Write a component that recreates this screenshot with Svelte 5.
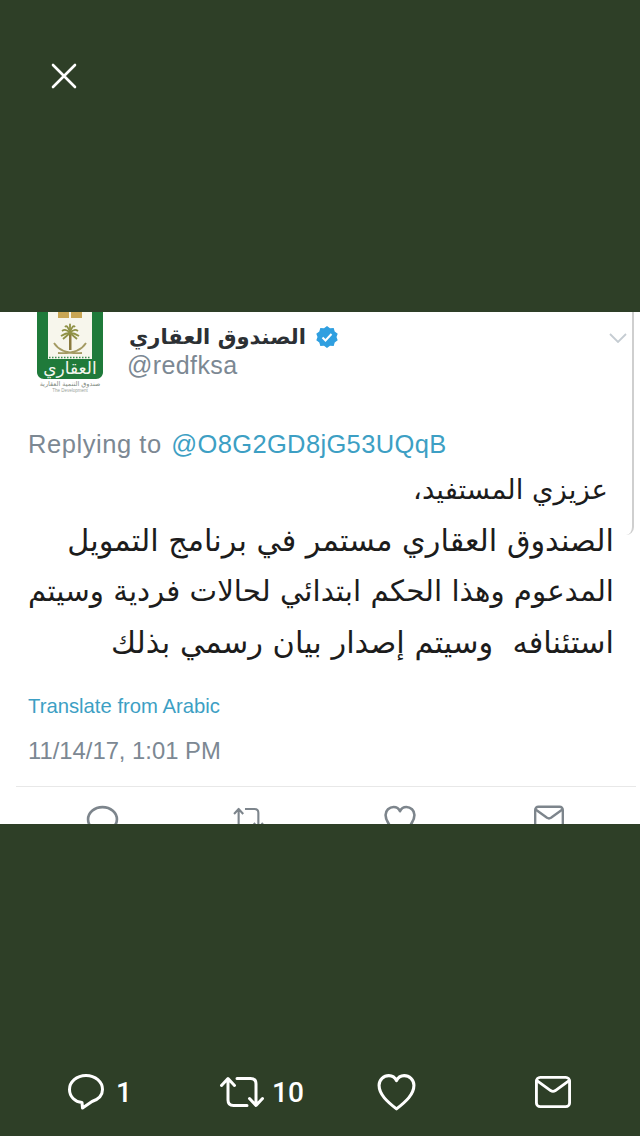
<script>
	const lines = [
		{ text: "عزيزي المستفيد،", cls: "l1" },
		{ text: "الصندوق العقاري مستمر في برنامج التمويل", cls: "l2" },
		{ text: "المدعوم وهذا الحكم ابتدائي لحالات فردية وسيتم", cls: "l3" },
		{ text: "استئنافه  وسيتم إصدار بيان رسمي بذلك", cls: "l4" }
	];

	// palm fronds for the logo, as [end x, end y] from the crown
	const fronds = [
		[26, 24], [27, 19], [30, 15], [35, 13], [40, 15], [43, 19], [44, 24], [28, 27], [42, 27]
	];
</script>

{#snippet reply()}
	<path d="M20 3.500C10.500 3.500 3.500 10 3.500 17.500c0 7 5.500 12.500 12.500 13l.5 5.500 9.500-6.500C32 27.500 36.500 23.500 36.500 17.500 36.500 10 29.500 3.500 20 3.500z" />
{/snippet}
{#snippet retweet()}
	<path d="M8 3v21c0 3.500 2 5.500 5.500 5.500H27M1.500 9.500L8 2.500l6.500 7M17 2.500h13.500c3.500 0 5.500 2 5.500 5.500v21M29.500 22.500l6.500 7 6.500-7" />
{/snippet}
{#snippet heart()}
	<path d="M20 36C11 29 3 22 3 13 3 7.500 7.500 3.500 12.500 3.500c3.300 0 6 1.600 7.500 5 1.500-3.400 4.200-5 7.500-5C32.500 3.500 37 7.500 37 13 37 22 29 29 20 36z" />
{/snippet}
{#snippet mail()}
	<rect x="2.500" y="3.500" width="35" height="31" rx="4" />
	<path d="M3 7l14.500 10.500c1.600 1 3.400 1 5 0L37 7" />
{/snippet}

<main class="viewer">
	<header class="top">
		<button class="close" aria-label="Close">
			<svg viewBox="0 0 26 26" width="26" height="26">
				<path d="M2 2l22 22M24 2L2 24" />
			</svg>
		</button>
	</header>

	<section class="photo">
		<div class="tweet">
			<div class="head">
				<svg class="logo" viewBox="0 0 70 82" width="70" height="82">
					<path d="M2 0h66v60c0 4-3 7-7 7H9c-4 0-7-3-7-7z" fill="#1f7a3a" />
					<path d="M13 0h44v47H13z" fill="#f7f6ec" />
					<rect x="23" y="0" width="24" height="6" fill="#c9a653" />
					<rect x="34" y="0" width="2" height="6" fill="#f7f6ec" />
					<path d="M34 21h2.500v17H34z" fill="#8a7a3e" />
					{#each fronds as [x, y]}
						<path d="M35 21Q{(x + 35) / 2} {y - 3} {x} {y}" fill="none" stroke="#8f9145" stroke-width="1.800" />
					{/each}
					<path d="M19 31c5 8 14 11 28 10M51 31c-5 8-14 11-28 10" fill="none" stroke="#a39a62" stroke-width="1.800" />
					<path d="M14 45.500h42" stroke="#3b8a50" stroke-width="1.500" stroke-dasharray="1.500 1.500" />
					<text class="logo-word" x="35" y="62" text-anchor="middle">العقاري</text>
					<text class="logo-small" x="35" y="74" text-anchor="middle">صندوق التنمية العقارية</text>
					<text class="logo-tiny" x="35" y="80" text-anchor="middle">The Development</text>
				</svg>
				<div class="who">
					<div class="name-row">
						<span class="name" dir="rtl">الصندوق العقاري</span>
						<svg class="badge" viewBox="0 0 24 24" width="24" height="24">
							<path d="M12 1l3 2.200 3.700-.2 1 3.600 3 2.200L21.500 12l1.200 3.200-3 2.200-1 3.600-3.700-.2L12 23l-3-2.200-3.700.2-1-3.600-3-2.200L2.500 12 1.300 8.800l3-2.200 1-3.600 3.700.2z" fill="#2f9fe0" />
							<path d="M7.500 12.500l3 3 6-6.500" fill="none" stroke="#fff" stroke-width="2" />
						</svg>
					</div>
					<div class="handle">@redfksa</div>
				</div>
				<svg class="caret" viewBox="0 0 18 10" width="18" height="10">
					<path d="M1 1l8 8 8-8" />
				</svg>
			</div>

			<p class="replying">Replying to <span class="link">@O8G2GD8jG53UQqB</span></p>

			<div class="body" dir="rtl">
				{#each lines as line}
					<div class={line.cls}>{line.text}</div>
				{/each}
			</div>

			<div class="translate">Translate from Arabic</div>
			<div class="stamp">11/14/17, 1:01 PM</div>
			<hr />
			<div class="tweet-actions">
				<svg viewBox="0 0 40 40" width="35" height="35">{@render reply()}</svg>
				<svg class="rt" viewBox="0 0 44 32" width="31" height="23">{@render retweet()}</svg>
				<svg viewBox="0 0 40 40" width="34" height="34">{@render heart()}</svg>
				<svg viewBox="0 0 40 38" width="32" height="30">{@render mail()}</svg>
			</div>
		</div>
	</section>

	<footer class="bar">
		<div class="action first">
			<svg viewBox="0 0 40 40" width="40" height="40">{@render reply()}</svg>
			<span>1</span>
		</div>
		<div class="action second">
			<svg viewBox="0 0 44 32" width="44" height="32">{@render retweet()}</svg>
			<span>10</span>
		</div>
		<div class="action third">
			<svg viewBox="0 0 40 40" width="41" height="41">{@render heart()}</svg>
		</div>
		<div class="action">
			<svg viewBox="0 0 40 38" width="38" height="36">{@render mail()}</svg>
		</div>
	</footer>
</main>

<style>
	:global(body) {
		margin: 0;
		background: #2e3f27;
	}

	.viewer {
		width: 640px;
		height: 1136px;
		display: flex;
		flex-direction: column;
		background: #2e3f27;
		font-family: "Liberation Sans", Arial, sans-serif;
		overflow: hidden;
	}

	.top {
		height: 312px;
		flex: none;
		padding: 63px 0 0 51px;
		box-sizing: border-box;
	}

	.close {
		display: block;
		padding: 0;
		border: 0;
		background: none;
	}

	.close path {
		fill: none;
		stroke: #fff;
		stroke-width: 2.600;
		stroke-linecap: round;
	}

	.photo {
		height: 512px;
		flex: none;
		background: #fff;
		overflow: hidden;
	}

	.tweet {
		width: 634px;
		height: 223px;
		box-sizing: border-box;
		border-right: 2px solid #cfcfcf;
		border-bottom-right-radius: 8px;
	}

	.head {
		display: flex;
		align-items: flex-start;
		padding-left: 35px;
		width: 597px;
	}

	.logo {
		flex: none;
	}

	.who {
		margin-left: 22px;
		padding-top: 11px;
		flex: 1;
	}

	.name-row {
		display: flex;
		align-items: center;
		gap: 7px;
		height: 28px;
	}

	.name {
		font-family: "DejaVu Sans", sans-serif;
		font-size: 21px;
		font-weight: 700;
		color: #2c3034;
		width: 181px;
		white-space: nowrap;
		text-align: center;
	}

	.handle {
		font-size: 25px;
		line-height: 28px;
		letter-spacing: 0.4px;
		color: #7c8893;
	}

	.caret {
		margin: 21px 5px 0 0;
	}

	.caret path {
		fill: none;
		stroke: #c5ccd2;
		stroke-width: 1.800;
	}

	.logo-word {
		font-family: "DejaVu Sans", sans-serif;
		font-size: 17px;
		fill: #f4f7ef;
	}

	.logo-small {
		font-family: "DejaVu Sans", sans-serif;
		font-size: 6.500px;
		fill: #7f8a80;
	}

	.logo-tiny {
		font-size: 4.500px;
		fill: #9aa39c;
	}

	.replying {
		margin: 36px 0 0 28px;
		font-size: 25.500px;
		line-height: 28px;
		letter-spacing: 0.55px;
		color: #7c8893;
		white-space: nowrap;
	}

	.link,
	.translate {
		color: #3d9fc4;
	}

	.link {
		margin-left: 2px;
		letter-spacing: 0.35px;
	}

	.body {
		width: 614px;
		margin-top: 6px;
		font-family: "DejaVu Sans", sans-serif;
		font-size: 30.300px;
		line-height: 51px;
		color: #1c1c1c;
		white-space: pre;
		text-align: right;
	}

	.l1 {
		padding-right: 6px;
		font-size: 27.500px;
	}

	.l3 {
		font-size: 29.300px;
	}

	.l4 {
		font-size: 30.400px;
	}

	.translate {
		margin: 26px 0 0 28px;
		font-size: 20.300px;
		line-height: 24px;
	}

	.stamp {
		margin: 18px 0 0 28px;
		font-size: 23.800px;
		line-height: 30px;
		color: #7c8893;
	}

	hr {
		width: 620px;
		margin: 20px 0 0 16px;
		border: 0;
		border-top: 1px solid #e8e8e8;
	}

	.tweet-actions {
		display: grid;
		grid-template-columns: 148px 149.500px 150.500px auto;
		align-items: start;
		padding: 17px 0 0 85px;
	}

	.rt {
		margin-top: 3px;
	}

	.tweet-actions path,
	.tweet-actions rect {
		fill: none;
		stroke: #7d858c;
		stroke-width: 3;
		stroke-linejoin: round;
	}

	.bar {
		flex: 1;
		display: flex;
		align-items: flex-start;
		padding: 246px 0 0 66px;
		box-sizing: border-box;
	}

	.action {
		display: flex;
		align-items: center;
		gap: 8px;
		height: 44px;
		color: #fff;
		font-family: Roboto, sans-serif;
		font-size: 28px;
		font-weight: 500;
	}

	.action path,
	.action rect {
		fill: none;
		stroke: #fff;
		stroke-width: 3;
		stroke-linejoin: round;
		stroke-linecap: round;
	}

	.first {
		width: 154px;
		gap: 10px;
	}

	.second {
		width: 156px;
	}

	.third {
		width: 158px;
	}
</style>
